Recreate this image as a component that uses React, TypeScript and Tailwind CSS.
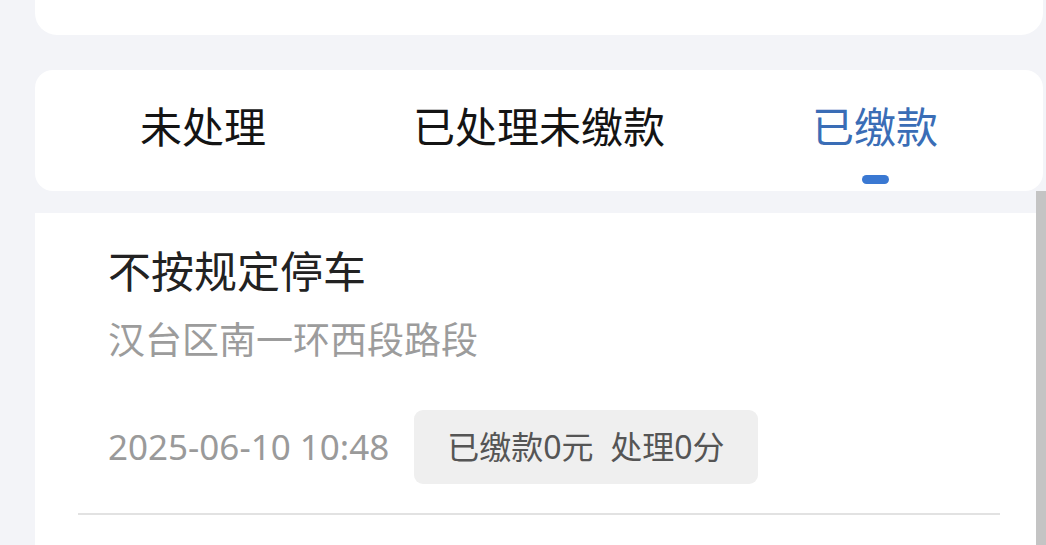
import { useState } from 'react';

const tabs = ['未处理', '已处理未缴款', '已缴款'];

interface Violation {
  id: number;
  title: string;
  place: string;
  time: string;
  fine: number;
  points: number;
}

const records: Violation[] = [
  {
    id: 1,
    title: '不按规定停车',
    place: '汉台区南一环西段路段',
    time: '2025-06-10 10:48',
    fine: 0,
    points: 0,
  },
];

export default function App() {
  const [active, setActive] = useState(2);

  return (
    <div
      className="relative flex h-[545px] w-[1046px] flex-col overflow-hidden bg-[#f3f4f8]"
      style={{ fontFamily: '"Noto Sans", "Noto Sans CJK SC", sans-serif' }}
    >
      {/* summary card, scrolled mostly out of view */}
      <div className="ml-[35px] mr-[3px] h-[35px] shrink-0 rounded-b-[22px] bg-white" />

      {/* status tabs */}
      <div className="ml-[35px] mr-[3px] mt-[35px] grid h-[121px] shrink-0 grid-cols-3 rounded-[18px] bg-white">
        {tabs.map((tab, i) => (
          <button
            key={tab}
            onClick={() => setActive(i)}
            className="relative flex flex-col items-center pt-[29px]"
          >
            <span
              className={
                'text-[42px] leading-[56px] ' +
                (i === active ? 'text-[#3a6db6]' : 'text-[#141414]')
              }
            >
              {tab}
            </span>
            {i === active && (
              <span className="mt-[20px] h-[9px] w-[27px] rounded-full bg-[#3a78d2]" />
            )}
          </button>
        ))}
      </div>

      {/* violation list */}
      <div className="ml-[35px] mr-[3px] mt-[22px] flex-1 bg-white">
        {records.map((r) => (
          <div key={r.id} className="px-[43px] pt-[28px]">
            <div className="pl-[30px]">
              <div className="text-[43px] leading-[62px] text-[#222]">{r.title}</div>
              <div className="mt-[12px] text-[37px] leading-[50px] text-[#9c9c9c]">{r.place}</div>
              <div className="mt-[45px] flex items-center">
                <span className="text-[35px] leading-[50px] text-[#9a9a9a]">{r.time}</span>
                <span className="ml-[25px] flex h-[74px] items-center rounded-[9px] bg-[#efefef] px-[33px] text-[32px] text-[#555]">
                  已缴款{r.fine}元&nbsp;&nbsp;处理{r.points}分
                </span>
              </div>
            </div>
            <div className="mt-[29px] h-[2px] bg-[#e2e2e2]" />
          </div>
        ))}
      </div>

      {/* scrollbar thumb */}
      <div className="absolute right-0 top-[191px] h-[354px] w-[10px] bg-[#c4c4c4]" />
    </div>
  );
}
